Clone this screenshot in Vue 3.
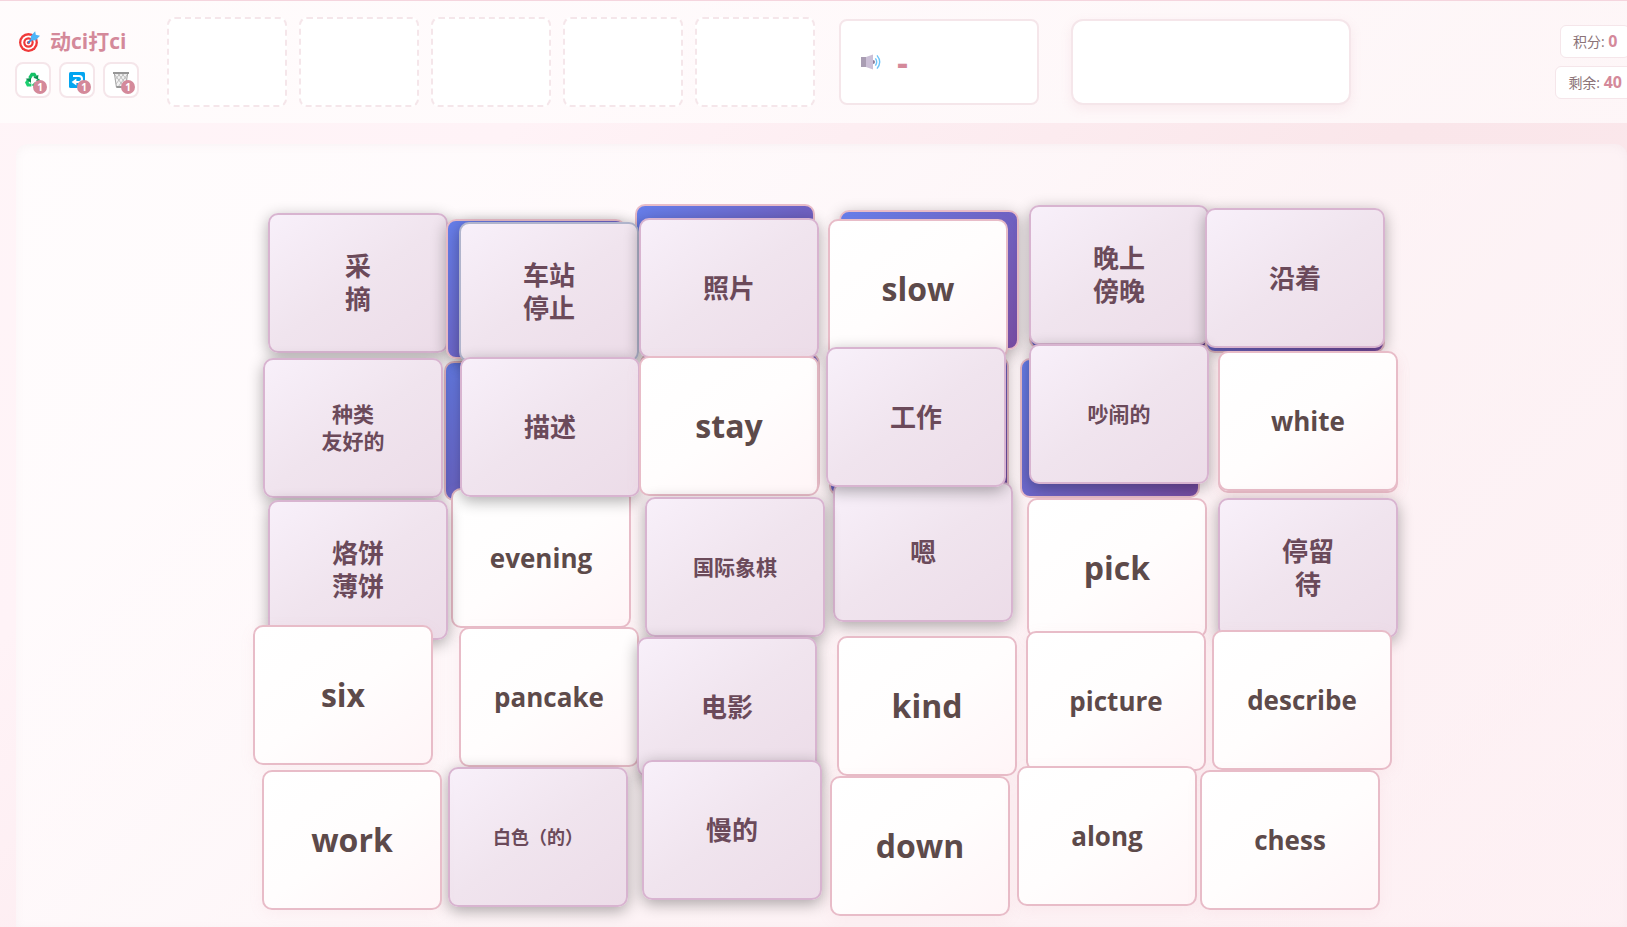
<template>
    <div class="page">
        <div class="game">
            <header class="toolbar">
                <div class="brand">
                    <h1 class="title">
                        <svg class="title-icon" viewBox="0 0 20 20" aria-hidden="true">
                            <circle cx="9" cy="11" r="9" fill="#f03a3a" />
                            <circle cx="9" cy="11" r="6.8" fill="#fff" />
                            <circle cx="9" cy="11" r="5" fill="#f03a3a" />
                            <circle cx="9" cy="11" r="2.9" fill="#fff" />
                            <circle cx="9" cy="11" r="1.5" fill="#f03a3a" />
                            <path d="M9 11 L14 6" stroke="#2b8be0" stroke-width="1.6" stroke-linecap="round" />
                            <path d="M11 9 L11.5 4.6 L15.4 0.2 L16 3.6 L20 4.6 L16 8.8 Z" fill="#4db5f8" />
                        </svg>
                        <span>动ci打ci</span>
                    </h1>
                    <div class="tools">
                        <button v-for="tool in tools" :key="tool.name" class="tool" type="button" :aria-label="tool.name">
                            <svg v-if="tool.name === 'shuffle'" viewBox="0 0 16 16" aria-hidden="true">
                                <g fill="none" stroke-width="3.2">
                                    <path d="M4.6 6.2 L7 2.4 H9.2 L10.6 4.6" stroke="#14c267" />
                                    <path d="M12.6 7.2 L14.2 10.4 L13 13 H9.6" stroke="#08a45a" />
                                    <path d="M6.4 13 H3 L1.8 10.6 L3.4 8" stroke="#1ccf70" />
                                </g>
                                <path d="M8.4 5.8 L13.4 2.8 L13 7.6 Z" fill="#0b8f50" />
                                <path d="M10.4 9.8 V16 L6.8 13 Z" fill="#14c267" />
                                <path d="M0.6 6.8 L6 6 L6 11 Z" fill="#0b8f50" />
                            </svg>
                            <svg v-else-if="tool.name === 'undo'" viewBox="0 0 16 16" aria-hidden="true">
                                <rect width="16" height="16" rx="1.5" fill="#03a5f0" />
                                <path d="M4 4 H10 Q13 4 13 7 T10 10 H5" fill="none" stroke="#fff" stroke-width="2" />
                                <path d="M7.4 6.4 V13.4 L2.6 10 Z" fill="#fff" />
                            </svg>
                            <svg v-else viewBox="0 0 16 16" aria-hidden="true">
                                <path d="M1.4 1.6 L3.4 15 H12.6 L14.6 1.6 Z" fill="#f2f2f2" stroke="#a3a3a3" />
                                <path
                                    d="M2 3 L11 15 M5 1.5 L13 12 M9 1.5 L14 8 M14 3 L5 15 M11 1.5 L3 12 M7 1.5 L2 8"
                                    stroke="#b2b2b2"
                                    stroke-width="0.8"
                                />
                                <path d="M0 1 H16 M3.4 15 H12.6" stroke="#969696" stroke-width="1.8" />
                            </svg>
                            <span class="badge">{{ tool.count }}</span>
                        </button>
                    </div>
                </div>

                <div class="slots">
                    <div v-for="n in 5" :key="n" class="slot"></div>
                </div>

                <div class="word-box">
                    <button class="speaker" type="button" aria-label="play">
                        <svg viewBox="0 0 20 16" aria-hidden="true">
                            <path d="M0 3 H5.4 V13 H0 Z" fill="#a99db3" />
                            <path d="M5 3 L12 0.5 V15.5 L5 13 Z" fill="#cbbfd6" />
                            <path d="M12 6 A2 2 0 0 1 12 10 Z" fill="#8e7f9c" />
                            <path
                                d="M14.4 4.4 Q17 8 14.4 11.6 M16 1.4 Q21.4 8 16 14.6"
                                fill="none"
                                stroke="#6cc4f8"
                                stroke-width="1.4"
                            />
                        </svg>
                    </button>
                    <span class="word">-</span>
                </div>

                <div class="meaning-box"></div>

                <div class="stats">
                    <div class="stat">积分: <strong>{{ score }}</strong></div>
                    <div class="stat">剩余: <strong>{{ cards.length }}</strong></div>
                </div>
            </header>

            <main class="board">
                <div class="deck">
                    <button
                        v-for="(card, i) in cards"
                        :key="i"
                        type="button"
                        class="card"
                        :class="[card.type, card.size]"
                        :style="{ left: card.x + 'px', top: card.y + 'px' }"
                    >{{ card.text }}</button>
                </div>
            </main>
        </div>
    </div>
</template>

<script setup>
import { ref } from 'vue';

const score = ref(0);

const tools = ref([
    { name: 'shuffle', count: 1 },
    { name: 'undo', count: 1 },
    { name: 'remove', count: 1 }
]);

const back = (x, y, type = 'back') => ({ type, size: '', x, y, text: '' });
const cn = (x, y, text, size = 'md', type = 'cn') => ({ type, size, x, y, text });
const en = (x, y, text, size = 'lg') => ({ type: 'en', size, x, y, text });

// Later cards lie on top of earlier ones
const cards = ref([
    back(203, 217),
    back(977, 209, 'en'),
    back(588, 212),
    en(210, 344, 'evening', 'md'),
    cn(592, 338, '嗯'),
    cn(27, 69, '采\n摘'),
    back(394, 60),
    back(399, 209),
    back(205, 75, 'back raised'),
    cn(218, 78, '车站\n停止', 'md', 'cn active'),
    cn(398, 74, '照片'),
    back(598, 66, 'back raised'),
    en(587, 75, 'slow'),
    back(788, 65),
    cn(788, 61, '晚上\n傍晚'),
    back(964, 69),
    cn(964, 64, '沿着'),
    cn(22, 214, '种类\n友好的', 'sm'),
    cn(219, 213, '描述'),
    en(398, 212, 'stay'),
    cn(585, 203, '工作'),
    back(779, 214),
    cn(788, 200, '吵闹的', 'sm'),
    en(977, 207, 'white', 'md'),
    cn(27, 356, '烙饼\n薄饼'),
    cn(404, 353, '国际象棋', 'sm'),
    en(786, 354, 'pick'),
    cn(977, 354, '停留\n待'),
    en(12, 481, 'six'),
    en(218, 483, 'pancake', 'md'),
    cn(396, 493, '电影'),
    en(596, 492, 'kind'),
    en(785, 487, 'picture', 'md'),
    en(971, 486, 'describe', 'md'),
    cn(207, 623, '白色（的）', 'xs'),
    en(21, 626, 'work'),
    cn(401, 616, '慢的'),
    en(589, 632, 'down'),
    en(776, 622, 'along', 'md'),
    en(959, 626, 'chess', 'md')
]);
</script>

<style>
body {
    background: #fff5f8;
    overflow: hidden;
}
</style>

<style scoped>
.page {
    height: 100vh;
    overflow: hidden;
    background: linear-gradient(135deg, #fff5f8 0%, #fff3f7 25%, #fae6ea 60%, #fceaee 100%);
    font-family: "Open Sans", "Noto Sans", "Noto Sans CJK SC", sans-serif;
    color: #5d4a4a;
}

.page *,
.page {
    box-sizing: border-box;
}

/* The playfield is a little wider than the window */
.game {
    display: flex;
    flex-direction: column;
    width: calc(100% + 16px);
    height: 100%;
}

.toolbar {
    display: flex;
    align-items: center;
    gap: 24px;
    padding: 16px 8px 16px 15px;
    border-top: 1px solid #f5d5de;
    background: linear-gradient(135deg, rgba(255, 253, 253, 0.8), rgba(255, 251, 252, 0.75));
}

.brand {
    display: flex;
    flex-direction: column;
    gap: 6px;
    width: 128px;
    flex-shrink: 0;
}

.title {
    display: flex;
    align-items: center;
    gap: 10px;
    margin: 0;
    padding-left: 4px;
    font-size: 21px;
    font-weight: 700;
    line-height: 30px;
    color: #d4899a;
    white-space: nowrap;
}

.title-icon {
    width: 21px;
    height: 21px;
}

.tools {
    display: flex;
    gap: 8px;
}

.tool {
    position: relative;
    display: flex;
    align-items: center;
    justify-content: center;
    width: 36px;
    height: 36px;
    padding: 0;
    border: 2px solid #f5e6ea;
    border-radius: 8px;
    background: #fff;
    cursor: pointer;
}

.tool svg {
    width: 16px;
    height: 16px;
}

.badge {
    position: absolute;
    right: 2px;
    bottom: 2px;
    width: 14px;
    height: 14px;
    border-radius: 50%;
    background: #d4899a;
    color: #fff;
    font-family: "Open Sans", sans-serif;
    font-size: 10px;
    font-weight: 700;
    line-height: 14px;
    text-align: center;
}

.slots {
    display: flex;
    gap: 12px;
    flex-shrink: 0;
}

.slot {
    width: 120px;
    height: 90px;
    border: 2px dashed #f5e6ea;
    border-radius: 8px;
    background: #fff;
}

.word-box {
    display: flex;
    align-items: center;
    gap: 16px;
    width: 200px;
    height: 86px;
    padding: 0 20px;
    flex-shrink: 0;
    border: 2px solid #f5e6ea;
    border-radius: 8px;
    background: #fff;
}

.speaker {
    display: flex;
    padding: 0;
    border: 0;
    background: none;
    cursor: pointer;
}

.speaker svg {
    width: 20px;
    height: 16px;
}

.word {
    font-size: 34px;
    font-weight: 700;
    line-height: 44px;
    color: #d4899a;
}

.meaning-box {
    width: 280px;
    height: 86px;
    margin-left: 8px;
    flex-shrink: 0;
    border: 2px solid #f5e6ea;
    border-radius: 12px;
    background: #fff;
    box-shadow: 0 4px 12px rgba(212, 137, 154, 0.12);
}

.stats {
    display: flex;
    flex-direction: column;
    align-items: center;
    gap: 8px;
    margin-left: auto;
}

.stat {
    padding: 0 12px;
    border: 1px solid #f5e6ea;
    border-radius: 6px;
    background: #fff;
    font-size: 14px;
    line-height: 31px;
    color: #8b7378;
    white-space: nowrap;
}

.stat strong {
    font-size: 16px;
    color: #d4899a;
}

.board {
    flex: 1;
    margin: 21px 16px 0;
    border-radius: 12px 12px 0 0;
    background: linear-gradient(135deg, rgba(255, 254, 254, 0.8) 0%, rgba(255, 252, 253, 0.7) 40%, rgba(255, 246, 249, 0.5) 100%);
    box-shadow: inset 0 2px 10px rgba(160, 120, 130, 0.06);
}

.deck {
    position: relative;
    width: 1161px;
    height: 783px;
    margin: 0 auto;
}

.card {
    position: absolute;
    width: 180px;
    height: 140px;
    padding: 8px;
    border: 2px solid #e8bcc8;
    border-radius: 10px;
    font-family: inherit;
    font-weight: 700;
    text-align: center;
    white-space: pre-line;
    cursor: pointer;
}

.en {
    background: linear-gradient(145deg, #ffffff 0%, #fffdfd 50%, #fff5f7 100%);
    color: #5d4a4a;
    box-shadow: 0 4px 15px rgba(212, 137, 154, 0.08);
}

.cn {
    border-color: #d8b4d0;
    background: linear-gradient(145deg, #f8f0fa 0%, #f0e4ee 50%, #ecdce8 100%);
    color: #6b4a5a;
    box-shadow: 0 4px 15px rgba(0, 0, 0, 0.32);
}

.active {
    border-color: #b0b4cc;
}

.back {
    background: linear-gradient(135deg, #667eea 0%, #764ba2 100%);
}

.raised {
    box-shadow: 0 4px 15px rgba(0, 0, 0, 0.3);
}

.lg {
    font-size: 32px;
    line-height: 42px;
}

.md {
    font-size: 26px;
    line-height: 33px;
}

.sm {
    font-size: 21px;
    line-height: 27px;
}

.xs {
    font-size: 18px;
    line-height: 23px;
}
</style>
